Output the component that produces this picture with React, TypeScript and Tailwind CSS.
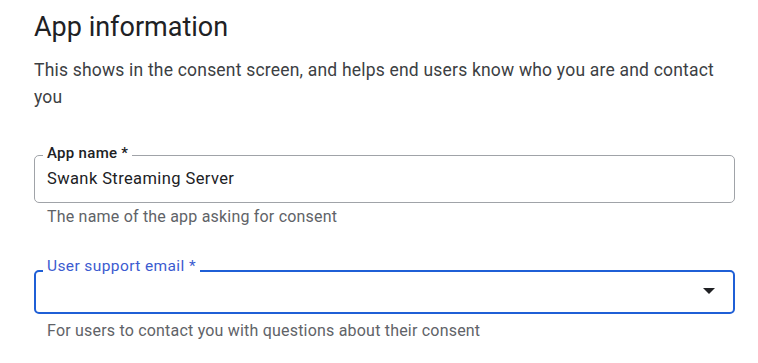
export default function App() {
  return (
    <div className="min-h-screen bg-white font-['Roboto',sans-serif] text-[#202124]">
      <div className="w-[701px] ml-[34px] pt-[11px]">
        <h1 className="text-[27px] leading-[32px] font-normal text-[#202124]">App information</h1>
        <p className="mt-[14px] text-[17.5px] leading-[27px] tracking-[0.2px] text-[#3c4043]">
          This shows in the consent screen, and helps end users know who you are and contact you
        </p>

        <div className="mt-[44px]">
          <div className="relative h-[48px] rounded-[5px] border border-[#a0a3a8] flex items-center px-[12px]">
            <span className="absolute left-[8px] -top-[12px] bg-white px-[4px] text-[15px] leading-[18px] tracking-[0.3px] font-medium text-[#202124]">
              App name *
            </span>
            <span className="text-[16.5px] leading-[20px] tracking-[0.4px] text-[#202124]">Swank Streaming Server</span>
          </div>
          <div className="mt-[4px] pl-[13px] text-[16px] leading-[20px] tracking-[0.2px] text-[#5f6368]">
            The name of the app asking for consent
          </div>
        </div>

        <div className="mt-[43px]">
          <div className="relative h-[44px] rounded-[5px] border-2 border-[#1f5fd6] flex items-center justify-end pr-[18px]">
            <span className="absolute left-[7px] -top-[15px] bg-white px-[4px] text-[15.5px] leading-[18px] tracking-[0.4px] text-[#3b5bd0]">
              User support email *
            </span>
            <svg width="12" height="6" viewBox="0 0 12 6" className="mt-[-2px]">
              <path d="M0 0 L12 0 L6 6 Z" fill="#202124" />
            </svg>
          </div>
          <div className="mt-[7px] pl-[13px] text-[16px] leading-[20px] tracking-[0.2px] text-[#5f6368]">
            For users to contact you with questions about their consent
          </div>
        </div>
      </div>
    </div>
  );
}
